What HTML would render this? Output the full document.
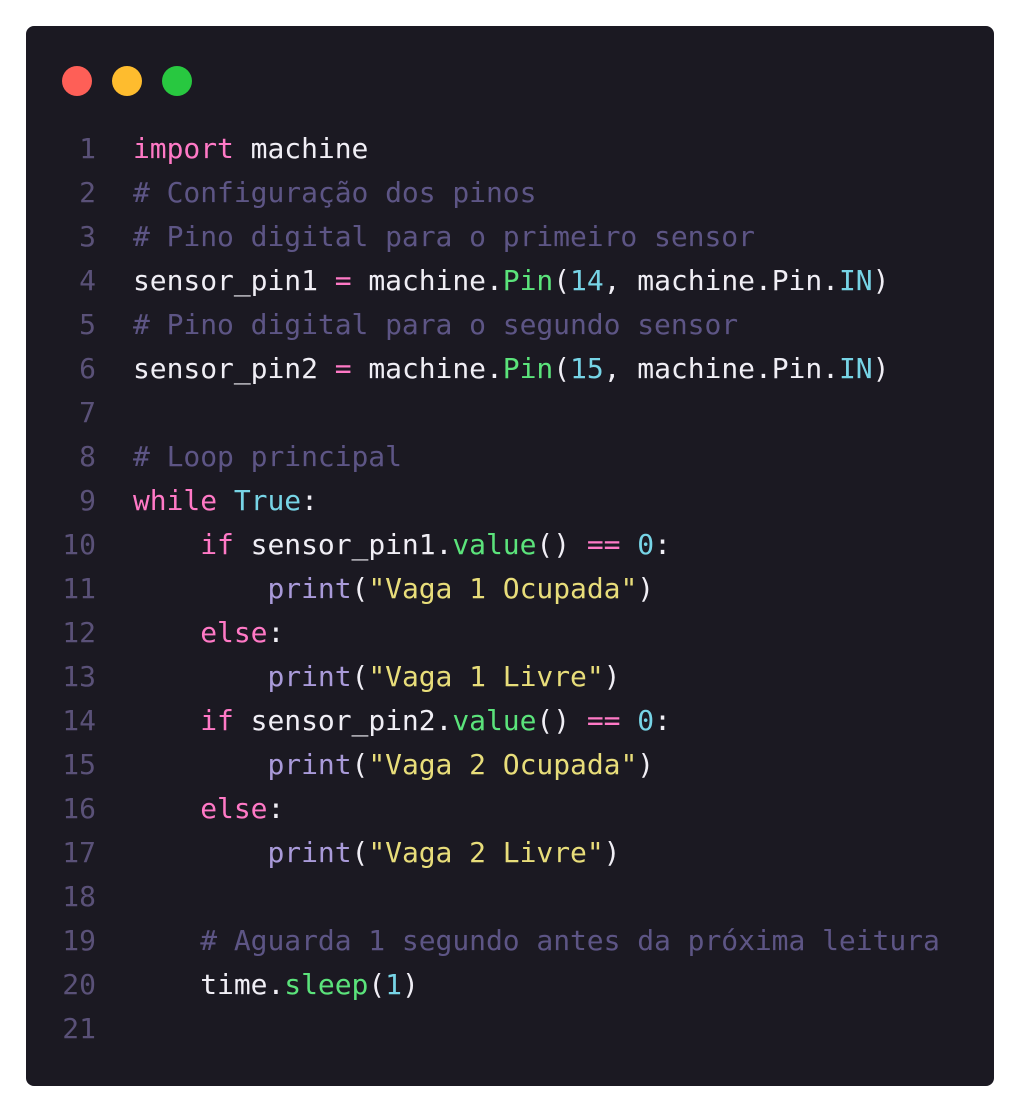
<!DOCTYPE html>
<html><head><meta charset="utf-8"><style>
html,body{margin:0;padding:0;background:#fff;width:1020px;height:1112px;overflow:hidden}
.box{position:absolute;left:26px;top:26px;width:968px;height:1060px;background:#1b1922;border-radius:8px}
.dot{position:absolute;top:66px;width:30px;height:30px;border-radius:50%}
pre{position:absolute;margin:0;top:127px;font-family:"DejaVu Sans Mono","Liberation Mono",monospace;font-size:28px;line-height:44px;color:#f0eef5}
.ln{left:50px;width:46px;text-align:right;color:#5a5178}
.code{left:133px;letter-spacing:-0.05px}
.k{color:#ff79c6}.c{color:#5d5585}.g{color:#5be37b}.n{color:#77d4e6}.s{color:#e8dd7a}.p{color:#a99ad9}
</style></head><body>
<div class="box"></div>
<div class="dot" style="left:62px;background:#fe5f57"></div>
<div class="dot" style="left:112px;background:#febc2e"></div>
<div class="dot" style="left:162px;background:#28c840"></div>
<pre class="ln">1
2
3
4
5
6
7
8
9
10
11
12
13
14
15
16
17
18
19
20
21</pre>
<pre class="code"><span class="k">import</span> machine
<span class="c"># Configuração dos pinos</span>
<span class="c"># Pino digital para o primeiro sensor</span>
sensor_pin1 <span class="k">=</span> machine.<span class="g">Pin</span>(<span class="n">14</span>, machine.Pin.<span class="n">IN</span>)
<span class="c"># Pino digital para o segundo sensor</span>
sensor_pin2 <span class="k">=</span> machine.<span class="g">Pin</span>(<span class="n">15</span>, machine.Pin.<span class="n">IN</span>)

<span class="c"># Loop principal</span>
<span class="k">while</span> <span class="n">True</span>:
    <span class="k">if</span> sensor_pin1.<span class="g">value</span>() <span class="k">==</span> <span class="n">0</span>:
        <span class="p">print</span>(<span class="s">"Vaga 1 Ocupada"</span>)
    <span class="k">else</span>:
        <span class="p">print</span>(<span class="s">"Vaga 1 Livre"</span>)
    <span class="k">if</span> sensor_pin2.<span class="g">value</span>() <span class="k">==</span> <span class="n">0</span>:
        <span class="p">print</span>(<span class="s">"Vaga 2 Ocupada"</span>)
    <span class="k">else</span>:
        <span class="p">print</span>(<span class="s">"Vaga 2 Livre"</span>)

    <span class="c"># Aguarda 1 segundo antes da próxima leitura</span>
    time.<span class="g">sleep</span>(<span class="n">1</span>)
</pre>
</body></html>
